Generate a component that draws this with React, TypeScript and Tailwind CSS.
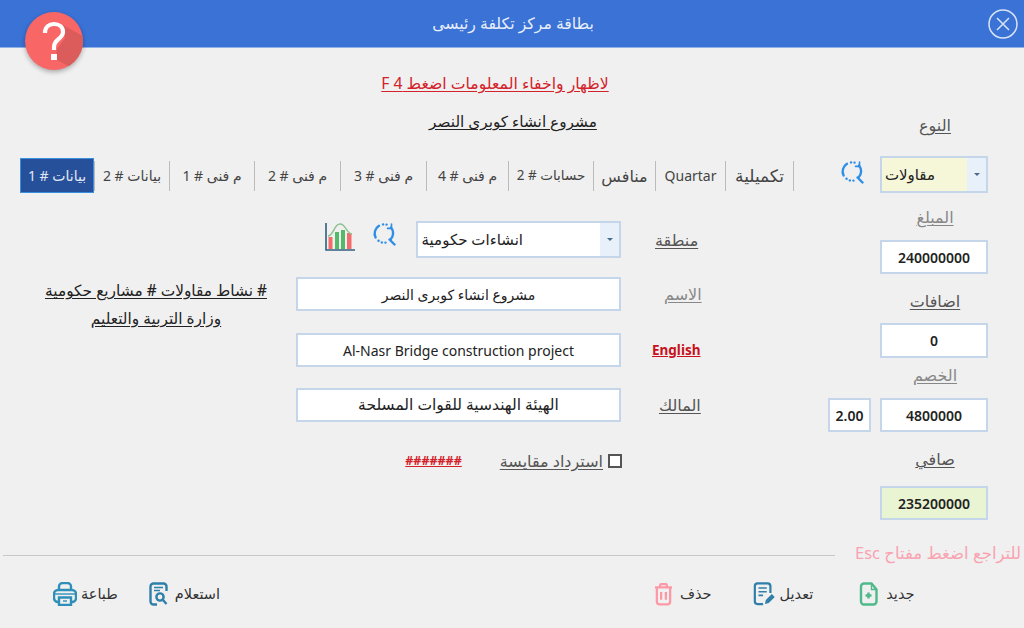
import React from 'react';

const tabs = [
    { label: 'بيانات # 2', width: 'w-[75px]', size: 'text-[14px]' },
    { label: 'م فنى # 1', width: 'w-[85px]', size: 'text-[14px]' },
    { label: 'م فنى # 2', width: 'w-[86px]', size: 'text-[14px]' },
    { label: 'م فنى # 3', width: 'w-[86px]', size: 'text-[14px]' },
    { label: 'م فنى # 4', width: 'w-[82px]', size: 'text-[14px]' },
    { label: 'حسابات # 2', width: 'w-[85px]', size: 'text-[13.5px]' },
    { label: 'منافس', width: 'w-[62px]', size: 'text-[16px]' },
    { label: 'Quartar', width: 'w-[70px]', size: 'text-[14px]' },
    { label: 'تكميلية', width: 'w-[68px]', size: 'text-[17px]' },
];

const RefreshSearch = () => (
    <svg width="24" height="24" viewBox="0 0 24 24" fill="none" stroke="#2f8fe6" strokeWidth="2.4" strokeLinecap="round">
        <path d="M7 3.8A9 9 0 0 0 3.6 15.5" />
        <path d="M11 2.4h.1M14.5 2.6h.1" />
        <path d="M19 5.5A9 9 0 0 1 18.6 17.5" />
        <path d="M6.5 18.8h.1M9.8 20.4h.1M13.4 20.6h.1" />
        <path d="M17.5 17.5L22.5 22.5" />
        <path d="M19.5 2v4.4h-4" strokeWidth="1.6" />
    </svg>
);

const ChartIcon = () => (
    <svg width="32" height="32" viewBox="0 0 32 32" fill="none">
        <path d="M2 2v27h29" stroke="#2f5f7f" strokeWidth="1.6" />
        <rect x="4.5" y="16" width="4" height="12" fill="#f36b6b" />
        <rect x="11" y="11" width="4" height="17" fill="#55b96a" />
        <rect x="17" y="9" width="4" height="19" fill="#55b96a" />
        <rect x="23" y="12" width="4.5" height="16" fill="#f36b6b" />
        <path d="M4 15C10 14 10 3 16 3s6 9 12 10" stroke="#8cc08f" strokeWidth="1.4" />
    </svg>
);

const NewIcon = () => (
    <svg width="19" height="24" viewBox="0 0 19 24" fill="none" stroke="#4fb98a" strokeWidth="2.4">
        <path d="M5 1.5h7.5l5 6v12a3 3 0 0 1-3 3H5a3 3 0 0 1-3-3v-15a3 3 0 0 1 3-3z" />
        <path d="M12.5 1.5v6h5" strokeWidth="1.4" />
        <path d="M9.5 10.5v6M6.5 13.5h6" />
    </svg>
);

const EditIcon = () => (
    <svg width="22" height="24" viewBox="0 0 24 26" fill="none" stroke="#2f7fa8" strokeWidth="2.4">
        <path d="M11 24H5a3 3 0 0 1-3-3V4.5a3 3 0 0 1 3-3h11a3 3 0 0 1 3 3V12" />
        <path d="M6 6.5h9M6 10.5h9M6 14.5h5" strokeWidth="1.7" />
        <path d="M13 24l1-4.5 6.5-6.5 3.2 3.2-6.5 6.5z" fill="#2f7fa8" stroke="none" />
    </svg>
);

const TrashIcon = () => (
    <svg width="19" height="24" viewBox="0 0 20 24" fill="none" stroke="#fb9aa6" strokeWidth="2.4">
        <path d="M1 5h18M6.5 5V2.5a1 1 0 0 1 1-1h5a1 1 0 0 1 1 1V5" />
        <path d="M3 5v15a3 3 0 0 0 3 3h8a3 3 0 0 0 3-3V5" />
        <path d="M7.5 10v8M12.5 10v8" />
    </svg>
);

const InquiryIcon = () => (
    <svg width="20" height="24" viewBox="0 0 20 24" fill="none" stroke="#2f7fa8" strokeWidth="2.4">
        <path d="M8 22.5H4.5a3 3 0 0 1-3-3v-15a3 3 0 0 1 3-3h10a3 3 0 0 1 3 3V9" />
        <path d="M5 5.5h9M5 8.5h6" strokeWidth="1.4" />
        <circle cx="11" cy="15" r="3.6" />
        <path d="M14 18l3.5 4" />
    </svg>
);

const PrintIcon = () => (
    <svg width="24" height="24" viewBox="0 0 24 24" fill="none" stroke="#2f8fb8" strokeWidth="2.4">
        <path d="M6 8V4.5a3.5 3.5 0 0 1 3.5-3.5h5A3.5 3.5 0 0 1 18 4.5V8" />
        <path d="M6 20H5a4 4 0 0 1-4-4v-4a4 4 0 0 1 4-4h14a4 4 0 0 1 4 4v4a4 4 0 0 1-4 4h-1" />
        <path d="M1.5 12h21" strokeWidth="1.4" />
        <path d="M6 15.5h12V23H6z" />
        <path d="M10 19h4" strokeWidth="1.4" />
    </svg>
);

const Label = ({ children, className = '' }: { children: React.ReactNode; className?: string }) => (
    <div dir="rtl" className={`text-[16px] leading-[18px] text-[#555] underline underline-offset-2 ${className}`}>{children}</div>
);

const Box = ({ children, className = '' }: { children: React.ReactNode; className?: string }) => (
    <div className={`flex shrink-0 items-center justify-center bg-white border-2 border-[#c5d6ea] text-[14px] text-[#222] ${className}`}>{children}</div>
);

const Select = ({ children, className = '', fill = 'bg-white pr-[77px]' }: { children: React.ReactNode; className?: string; fill?: string }) => (
    <div className={`flex shrink-0 border-2 border-[#c5d6ea] bg-white ${className}`}>
        <div className="order-2 flex w-[19px] shrink-0 items-center justify-center bg-[#e8f0fa]">
            <div className="h-0 w-0 border-x-[3px] border-t-[3px] border-x-transparent border-t-[#4a6a90]" />
        </div>
        <div dir="rtl" className={`flex flex-1 items-center text-[15px] text-[#222] ${fill}`}>{children}</div>
    </div>
);

const FooterAction = ({ icon, label, className = '' }: { icon: React.ReactNode; label: string; className?: string }) => (
    <div className={`flex items-center text-[14.5px] text-[#333] ${className}`}>
        {icon}
        <span dir="rtl">{label}</span>
    </div>
);

export default function App() {
    return (
        <div className="relative flex h-[628px] w-[1024px] flex-col overflow-hidden bg-[#f0f0f0] font-['Noto_Sans','DejaVu_Sans',sans-serif]">
            {/* شريط العنوان */}
            <header className="flex h-12 shrink-0 items-center border-b border-[#8fb0e6] bg-[#3a72d6] pr-[6px]">
                <div dir="rtl" className="flex-1 pl-[38px] text-center text-[15.7px] text-[#e8effa]">بطاقة مركز تكلفة رئيسى</div>
                <svg width="30" height="30" viewBox="0 0 30 30" fill="none" stroke="#d8e4f8" strokeWidth="1.5">
                    <circle cx="15" cy="15" r="14" />
                    <path d="M9 9l12 12M21 9L9 21" />
                </svg>
            </header>

            {/* زر المساعدة */}
            <div className="absolute left-[25px] top-[12px] h-[58px] w-[58px] overflow-hidden rounded-full bg-[#f96666] shadow-[0_2px_5px_rgba(0,0,0,0.3)]">
                <svg width="58" height="58" viewBox="0 0 58 58" fill="none">
                    <path d="M38 13L58 24V38L47 56L30 47L32 37L40 26z" fill="#dc5c5c" />
                    <path d="M20 21c0-6 4-9 9-9s9 3 9 8c0 7-9 7-9 15v3" stroke="#fff" strokeWidth="4.2" />
                    <rect x="26" y="42" width="6" height="6" fill="#fff" />
                </svg>
            </div>

            <div dir="rtl" className="ml-[-34px] mt-[26px] h-[18px] text-center text-[15.7px] leading-[18px] text-[#d3222a] underline underline-offset-2">
                لاظهار واخفاء المعلومات اضغط F 4
            </div>

            <main className="flex flex-1">
                <div className="flex w-[828px] shrink-0 flex-col pl-[20px]">
                    <div dir="rtl" className="mt-[20px] h-[18px] pl-[178px] text-center text-[15.3px] font-medium leading-[18px] text-[#222] underline underline-offset-2">
                        مشروع انشاء كوبرى النصر
                    </div>

                    {/* التبويبات */}
                    <nav className="mt-[28px] flex h-[35px] items-center text-[#444]">
                        <div dir="rtl" className="flex h-[35px] w-[74px] items-center justify-center border border-[#3a8ee0] bg-[#27509b] text-[14px] text-[#e0e8f4]">بيانات # 1</div>
                        {tabs.map(t => (
                            <div key={t.label} dir="rtl" className={`flex h-[30px] items-center justify-center border-l border-[#bbb] first:border-l-0 ${t.width} ${t.size}`}>
                                {t.label}
                            </div>
                        ))}
                        <div className="h-[30px] border-l border-[#bbb]" />
                    </nav>

                    <div className="mt-[28px] flex">
                        <div dir="rtl" className="ml-[25px] mt-[56px] w-[222px] whitespace-nowrap text-center text-[15.4px] font-medium leading-[28px] text-[#222] underline underline-offset-2">
                            # نشاط مقاولات # مشاريع حكومية
                            <br />
                            وزارة التربية والتعليم
                        </div>
                        <div className="ml-[29px] flex w-[404px] flex-col">
                            <div className="flex h-[37px] items-center">
                                <div className="ml-[28px] flex items-start gap-[16px] self-start">
                                    <ChartIcon />
                                    <div className="mt-px"><RefreshSearch /></div>
                                </div>
                                <Select className="ml-[20px] h-[37px] w-[205px]">انشاءات حكومية</Select>
                                <Label className="ml-[34px]">منطقة</Label>
                            </div>
                            <div className="mt-[19px] flex h-[34px] items-center">
                                <Box className="h-[34px] w-[325px] text-[14.5px]"><span dir="rtl">مشروع انشاء كوبرى النصر</span></Box>
                                <Label className="ml-[43px] text-[#888]">الاسم</Label>
                            </div>
                            <div className="mt-[22px] flex h-[34px] items-center">
                                <Box className="h-[34px] w-[325px]">Al-Nasr Bridge construction project</Box>
                                <div className="ml-[31px] text-[13.5px] font-bold text-[#c8101c] underline">English</div>
                            </div>
                            <div className="mt-[21px] flex h-[34px] items-center">
                                <Box className="h-[34px] w-[325px] text-[15.5px]"><span dir="rtl">الهيئة الهندسية للقوات المسلحة</span></Box>
                                <Label className="ml-[38px]">المالك</Label>
                            </div>
                            <div className="mt-[32px] flex h-[14px] items-center">
                                <div className="ml-[109px] w-[57px] text-center text-[12.5px] font-bold leading-[14px] text-[#d3222a] underline">#######</div>
                                <Label className="ml-[40px] w-[101px] whitespace-nowrap text-center">استرداد مقايسة</Label>
                                <div className="ml-[5px] h-[14px] w-[14px] border-2 border-[#555] bg-white" />
                            </div>
                        </div>
                    </div>
                </div>

                {/* العمود الأيمن */}
                <div className="flex w-[160px] flex-col">
                    <Label className="ml-[77px] mt-[24px] w-[60px] text-center">النوع</Label>
                    <div className="mt-[22px] flex items-start">
                        <div className="ml-[12px] mr-[16px] mt-[4px]"><RefreshSearch /></div>
                        <Select className="h-[37px] w-[108px]" fill="bg-[#f6f6d8] pr-[32px]">مقاولات</Select>
                    </div>
                    <Label className="ml-[77px] mt-[15px] w-[60px] text-center text-[#888]">المبلغ</Label>
                    <Box className="ml-[52px] mt-[14px] h-[34px] w-[108px] font-semibold">240000000</Box>
                    <Label className="ml-[77px] mt-[18px] w-[60px] text-center">اضافات</Label>
                    <Box className="ml-[52px] mt-[13px] h-[35px] w-[108px] font-semibold">0</Box>
                    <Label className="ml-[77px] mt-[8px] w-[60px] text-center text-[#888]">الخصم</Label>
                    <div className="mt-[14px] flex gap-[9px]">
                        <Box className="h-[34px] w-[43px] font-semibold">2.00</Box>
                        <Box className="h-[34px] w-[108px] font-semibold">4800000</Box>
                    </div>
                    <Label className="ml-[77px] mt-[18px] w-[60px] text-center">صافي</Label>
                    <Box className="ml-[52px] mt-[18px] h-[34px] w-[108px] !bg-[#e9f4d2] font-semibold">235200000</Box>
                </div>
            </main>

            <div className="flex h-[22px] items-center pl-[3px]">
                <div className="h-px w-[832px] bg-[#c8c8c8]" />
                <div dir="rtl" className="mb-[4px] ml-[20px] whitespace-nowrap text-[16.5px] text-[#f9a3b0]">للتراجع اضغط مفتاح Esc</div>
            </div>

            <footer className="flex h-[62px] items-start pt-[16px]">
                <FooterAction className="ml-[53px] gap-1" icon={<PrintIcon />} label="طباعة" />
                <FooterAction className="ml-[31px] gap-[6px]" icon={<InquiryIcon />} label="استعلام" />
                <FooterAction className="ml-[434px] gap-[7px]" icon={<TrashIcon />} label="حذف" />
                <FooterAction className="ml-[41px] gap-[5px]" icon={<EditIcon />} label="تعديل" />
                <FooterAction className="ml-[46px] gap-[8px]" icon={<NewIcon />} label="جديد" />
            </footer>
        </div>
    );
}
